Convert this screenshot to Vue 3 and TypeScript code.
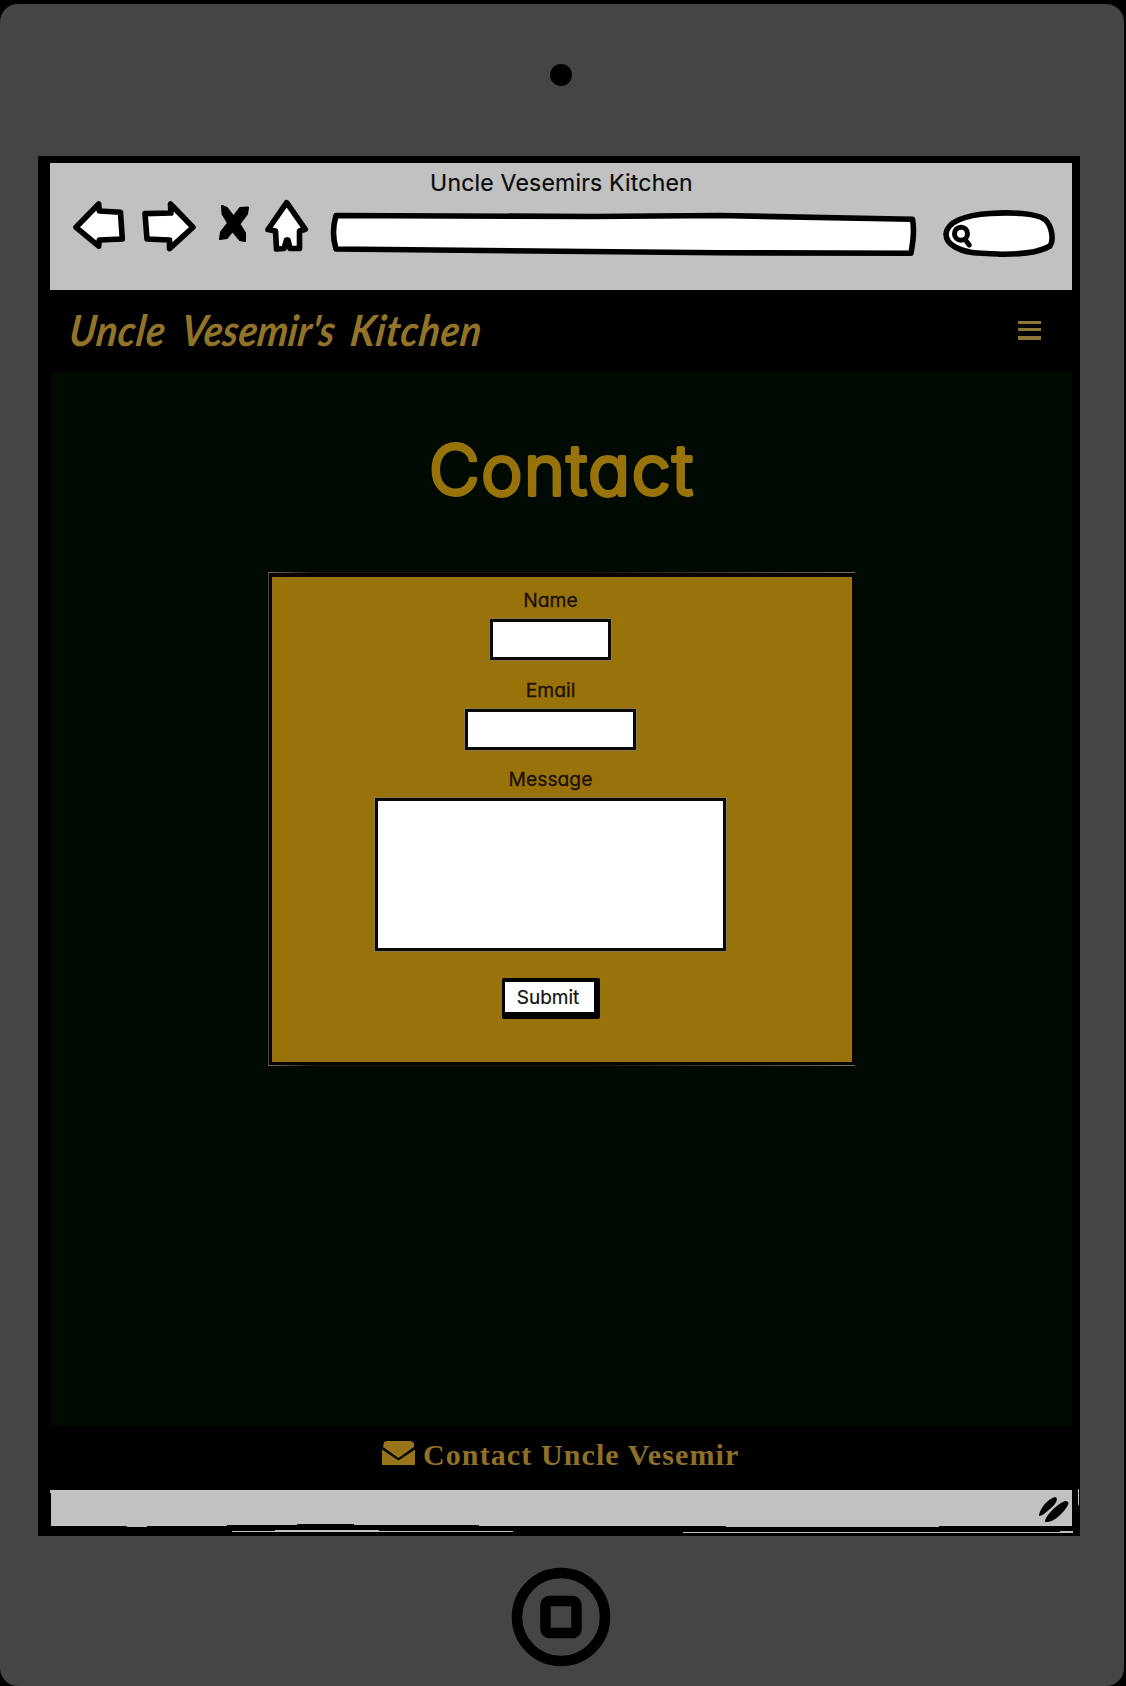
<script setup lang="ts">
interface Field {
  id: string
  label: string
  width: number
  height: number
  gap: number
}

const windowTitle = 'Uncle Vesemirs Kitchen'
const brandWords = ['Uncle', "Vesemir's", 'Kitchen']

const fields: Field[] = [
  { id: 'name', label: 'Name', width: 123, height: 43, gap: 15 },
  { id: 'email', label: 'Email', width: 173, height: 43, gap: 14 },
  { id: 'message', label: 'Message', width: 353, height: 155, gap: 26 },
]
</script>

<template>
  <div class="stage">
    <div class="tablet">
      <div class="camera"></div>

      <main class="screen">
        <header class="chrome">
          <div class="window-title"><span>{{ windowTitle }}</span></div>
          <div class="toolbar">
            <svg class="sketch" width="60" height="60" viewBox="70 197 60 60">
              <path d="M76 227.3 98.7 204l.6 7 21.2 1.3 1.8 26.7-23 1-.6 6.2Z" />
            </svg>
            <svg class="sketch" width="60" height="60" viewBox="140 197 60 60">
              <path d="M193 227.3 170.5 204l.4 9-25.9.6 2 25.4 22.500 1v8.6Z" />
            </svg>
            <svg class="stop" width="40" height="60" viewBox="214 197 40 60">
              <path d="M222 206 227 208 233.500 216.500 240 208 248 207.500 247 214 239.500 224 245 233 245 241 240 240 232.500 231 227 238 220 239 221 232 228 223 222.500 214Z" />
            </svg>
            <svg class="sketch" width="60" height="60" viewBox="257 197 60 60">
              <path d="M286.700 202.700 305.300 229.300 299.500 231v17.500h-9.500l-2-8.500h-1.500l-2.500 8.500-7.500.5-1-18-7.500-1.500Z" />
            </svg>
            <svg class="sketch url" width="600" height="60" viewBox="325 197 600 60">
              <path d="M336 215.500 592 216.500 720 215.500 912.500 219.300Q915 232 911 253.200L720 252.800 336 249Q331 233 336 215.500Z" />
            </svg>
            <svg class="sketch" width="124" height="66" viewBox="938 197 124 66">
              <path d="M946 234C947 222 965 215 990 213.500 1010 212 1036 213 1045 219.500 1052 226 1054 240 1050 246 1040 252 1020 254.500 1000 254.200 985 252.500 969 255 955 247 948 243 946 238 946 234Z" />
              <circle class="lens" cx="961" cy="233.700" r="6.500" />
              <path class="lens" d="m965.500 240 3.700 5" />
            </svg>
          </div>
        </header>

        <nav class="site-nav">
          <span class="brand"><template v-for="(word, i) in brandWords" :key="word"><span :class="'w' + i">{{ word }}</span>{{ ' ' }}</template></span>
          <svg class="menu" width="24" height="20" viewBox="0 0 24 20">
            <path d="M0 0h23v3H0zM0 7h23v3H0zM0 15h23v4H0z" />
          </svg>
        </nav>

        <section class="page">
          <svg class="heading" width="340" height="100" viewBox="-20 -10 340 100" role="heading">
            <text x="17" y="62.500" textLength="264">Contact</text>
          </svg>

          <form class="card" @submit.prevent>
            <template v-for="field in fields" :key="field.id">
              <label :for="field.id">{{ field.label }}</label>
              <div
                :id="field.id"
                class="box"
                :style="{ width: field.width + 'px', height: field.height + 'px', marginBottom: field.gap + 'px' }"
              ></div>
            </template>
            <button type="submit">Submit</button>
          </form>
        </section>

        <footer class="site-footer">
          <svg width="33" height="24" viewBox="0 0 33 24">
            <path d="M2 1 5 0h24l3 2v4L16.500 17 1 6Z" />
            <path d="M0 8.500 16.500 19.500 33 8.500V24H0Z" />
          </svg>
          <span>Contact Uncle Vesemir</span>
        </footer>

        <svg class="status" width="1042" height="46" viewBox="38 1490 1042 46" shape-rendering="crispEdges">
          <path class="bar" d="M50 1490H1072V1526H939V1527H726V1526H479V1525H442V1525H354V1524H297V1525H227V1526H147V1527H127V1526H51V1493H50Z" />
          <path class="bar" d="M232 1531h43v-1h104v1h134v1H232ZM683 1532h377v-1h13v2H683ZM1078 1489h1v16h-1Z" />
          <path class="grip" shape-rendering="auto" d="M1039 1516c0-6 8-17 16-19 4 1 1 7-4 11s-8 8-12 8ZM1045 1522c0-6 12-18 20-21 6 0 4 5-4 13s-12 8-16 8Z" />
        </svg>
      </main>

      <svg class="home" width="100" height="100" viewBox="0 0 100 100">
        <circle cx="50" cy="50" r="44" />
        <rect x="34.500" y="34" width="31" height="32" rx="4" />
      </svg>
    </div>
  </div>
</template>

<style>
body {
  background: #000;
}
</style>

<style scoped>
.stage {
  box-sizing: border-box;
  width: 1126px;
  height: 1686px;
  padding: 4px 2px 0 0;
  background: #000;
  overflow: hidden;
}
.tablet {
  box-sizing: border-box;
  width: 1124px;
  height: 1682px;
  padding-left: 38px;
  border-radius: 18px;
  background: #454545;
}
.camera {
  width: 22px;
  height: 22px;
  margin-left: 512px;
  border-radius: 50%;
  background: #000;
  position: relative;
  top: 60px;
}
.screen {
  display: flex;
  flex-direction: column;
  width: 1042px;
  height: 1380px;
  margin-top: 130px;
  background: #000;
}
.chrome {
  flex: none;
  width: 1022px;
  height: 127px;
  margin: 7px 0 0 12px;
  background: #c1c1c1;
}
.window-title {
  height: 34px;
  padding: 6px 0 0 1px;
  box-sizing: border-box;
  text-align: center;
  font: 400 23px/28px Inter, sans-serif;
  letter-spacing: 0.2px;
  -webkit-text-stroke: 0.2px #0a0a0a;
  color: #0a0a0a;
}
.toolbar {
  display: flex;
  padding-left: 20px;
}
.toolbar svg {
  flex: none;
  margin-right: 10px;
}
.toolbar svg:nth-child(2) { margin-right: 14px; }
.toolbar svg:nth-child(3) { margin-right: 3px; }
.toolbar svg:nth-child(4) { margin-right: 8px; }
.toolbar .url { margin-right: 13px; }
.sketch {
  fill: #fff;
  stroke: #000;
  stroke-width: 5.6;
  stroke-linejoin: round;
  stroke-linecap: round;
}
.stop {
  stroke: #000;
  stroke-width: 2;
  stroke-linejoin: round;
}
.lens {
  stroke-width: 5;
}
.site-nav {
  display: flex;
  flex: none;
  align-items: center;
  justify-content: space-between;
  box-sizing: border-box;
  height: 82px;
  padding: 0 38px 0 32px;
}
.brand {
  font: italic 700 43px/60px Lato, sans-serif;
  word-spacing: 8px;
  color: #927428;
  white-space: nowrap;
  transform: translateY(-1px) scaleX(0.9) skewX(-8deg);
  transform-origin: 0 50%;
}
.w0 {
  letter-spacing: 0.8px;
}
.w1 {
  letter-spacing: 0.1px;
}
.w2 {
  letter-spacing: 0.8px;
}
.menu {
  fill: #8f7538;
}
.page {
  flex: none;
  display: flex;
  flex-direction: column;
  align-items: center;
  box-sizing: border-box;
  width: 1021px;
  height: 1054px;
  margin-left: 13px;
  padding-top: 50px;
  background: #000a02;
}
.heading {
  flex: none;
  overflow: visible;
}
.heading text {
  font: 300 69.5px Inter, sans-serif;
  font-feature-settings: 'cv11';
  fill: #98730a;
  stroke: #98730a;
  stroke-width: 3.8;
  stroke-linejoin: round;
}
.card {
  position: relative;
  display: flex;
  flex-direction: column;
  align-items: center;
  box-sizing: border-box;
  width: 586px;
  height: 492px;
  margin-top: 51px;
  padding: 9px 22px 0 0;
  border: solid #0b0300;
  border-width: 4px 3px 3px;
  background: #98730a;
  box-shadow: inset 1px 1px #947320, -1px 0 #4b473b;
}
.card::before,
.card::after {
  content: '';
  position: absolute;
  left: -4px;
  width: 587px;
  height: 1px;
  background: linear-gradient(90deg, #777258, #1c1408 8%, #1c1408 55%, #4a422e 80%, #77705a);
}
.card::before {
  top: -5px;
}
.card::after {
  bottom: -4px;
}
label {
  height: 32px;
  font: 400 19.3px/28px Inter, sans-serif;
  font-feature-settings: 'cv11';
  -webkit-text-stroke: 0.3px #1f1002;
  color: #1f1002;
}
.box {
  box-sizing: border-box;
  flex: none;
  border: solid #0c0906;
  border-width: 4px;
  outline: 1px solid #8a7b50;
  outline-offset: -1px;
  background: #fff;
}
button {
  box-sizing: border-box;
  width: 98px;
  height: 41px;
  padding: 1px 2px 0 0;
  border: solid #000;
  border-width: 4px 6px 7px 3px;
  border-radius: 2px;
  background: #fff;
  font: 400 19px/29px Inter, sans-serif;
  -webkit-text-stroke: 0.2px #111;
  color: #111;
}
.site-footer {
  display: flex;
  flex: none;
  gap: 8px;
  box-sizing: border-box;
  height: 64px;
  padding: 15px 0 0 344px;
  font: 700 30px/28px "Liberation Serif", serif;
  letter-spacing: 1.1px;
  color: #8f7026;
  white-space: nowrap;
}
.site-footer svg {
  flex: none;
  fill: #98741a;
}
.status {
  display: block;
  flex: none;
  overflow: visible;
}
.bar {
  fill: #c1c1c1;
}
.home {
  display: block;
  margin: 31px 0 0 473px;
  fill: none;
  stroke: #000;
  stroke-width: 10.500;
}
</style>
